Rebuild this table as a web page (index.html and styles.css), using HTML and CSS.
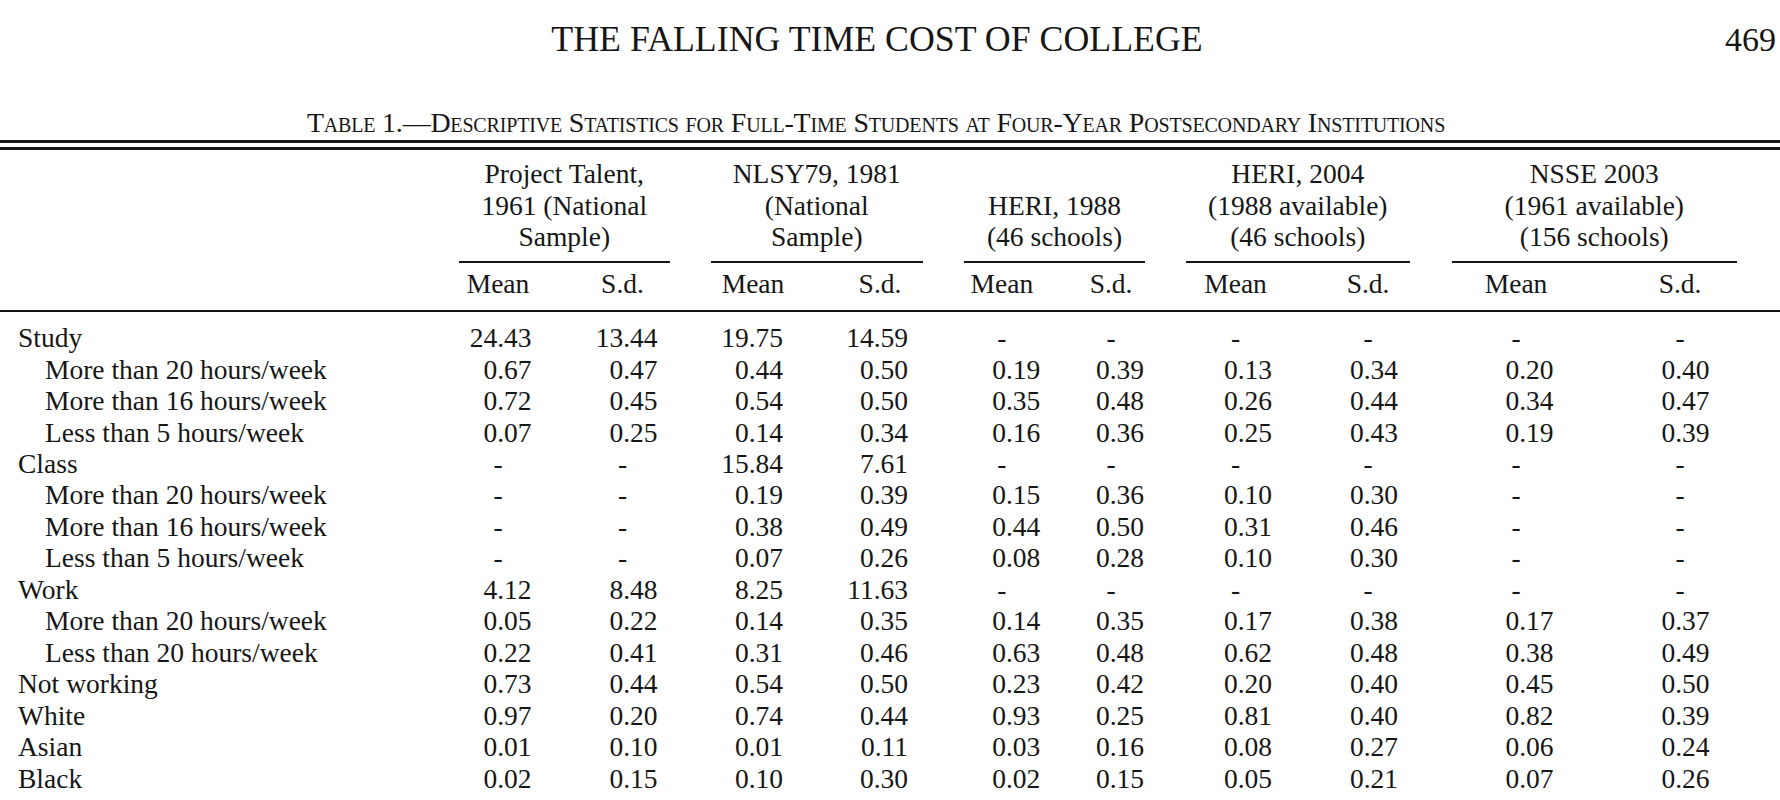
FILE: index.html
```html
<!DOCTYPE html>
<html lang="en">
<head>
<meta charset="utf-8">
<title>The Falling Time Cost of College</title>
<link rel="stylesheet" href="styles.css">
</head>
<body>
<header class="running">
  <div class="run-title">THE FALLING TIME COST OF COLLEGE</div>
  <div class="folio">469</div>
</header>
<div class="caption">Table 1.—Descriptive Statistics for Full-Time Students at Four-Year Postsecondary Institutions</div>
<div class="dbl"></div>
<table class="stats">
  <colgroup>
    <col class="w0"><col class="w1"><col class="w2"><col class="w3"><col class="w4"><col class="w5"><col class="w6"><col class="w7"><col class="w8"><col class="w9"><col class="w10">
  </colgroup>
  <thead>
    <tr class="groups">
      <th></th>
      <th colspan="2"><div class="span">Project Talent,<br>1961 (National<br>Sample)</div></th>
      <th colspan="2"><div class="span">NLSY79, 1981<br>(National<br>Sample)</div></th>
      <th colspan="2"><div class="span">HERI, 1988<br>(46 schools)</div></th>
      <th colspan="2"><div class="span">HERI, 2004<br>(1988 available)<br>(46 schools)</div></th>
      <th colspan="2"><div class="span">NSSE 2003<br>(1961 available)<br>(156 schools)</div></th>
    </tr>
    <tr class="r sub">
      <th></th>
      <th><span class="v c">Mean</span></th><th><span class="v c">S.d.</span></th>
      <th><span class="v c">Mean</span></th><th><span class="v c">S.d.</span></th>
      <th><span class="v c">Mean</span></th><th><span class="v c">S.d.</span></th>
      <th><span class="v c">Mean</span></th><th><span class="v c">S.d.</span></th>
      <th><span class="v c">Mean</span></th><th><span class="v c">S.d.</span></th>
    </tr>
  </thead>
  <tbody>
    <tr class="r"><td>Study</td><td><span class="v">24.43</span></td><td><span class="v">13.44</span></td><td><span class="v">19.75</span></td><td><span class="v">14.59</span></td><td><span class="v c">-</span></td><td><span class="v c">-</span></td><td><span class="v c">-</span></td><td><span class="v c">-</span></td><td><span class="v c">-</span></td><td><span class="v c">-</span></td></tr>
    <tr class="r ind"><td>More than 20 hours/week</td><td><span class="v">0.67</span></td><td><span class="v">0.47</span></td><td><span class="v">0.44</span></td><td><span class="v">0.50</span></td><td><span class="v">0.19</span></td><td><span class="v">0.39</span></td><td><span class="v">0.13</span></td><td><span class="v">0.34</span></td><td><span class="v">0.20</span></td><td><span class="v">0.40</span></td></tr>
    <tr class="r ind"><td>More than 16 hours/week</td><td><span class="v">0.72</span></td><td><span class="v">0.45</span></td><td><span class="v">0.54</span></td><td><span class="v">0.50</span></td><td><span class="v">0.35</span></td><td><span class="v">0.48</span></td><td><span class="v">0.26</span></td><td><span class="v">0.44</span></td><td><span class="v">0.34</span></td><td><span class="v">0.47</span></td></tr>
    <tr class="r ind"><td>Less than 5 hours/week</td><td><span class="v">0.07</span></td><td><span class="v">0.25</span></td><td><span class="v">0.14</span></td><td><span class="v">0.34</span></td><td><span class="v">0.16</span></td><td><span class="v">0.36</span></td><td><span class="v">0.25</span></td><td><span class="v">0.43</span></td><td><span class="v">0.19</span></td><td><span class="v">0.39</span></td></tr>
    <tr class="r"><td>Class</td><td><span class="v c">-</span></td><td><span class="v c">-</span></td><td><span class="v">15.84</span></td><td><span class="v">7.61</span></td><td><span class="v c">-</span></td><td><span class="v c">-</span></td><td><span class="v c">-</span></td><td><span class="v c">-</span></td><td><span class="v c">-</span></td><td><span class="v c">-</span></td></tr>
    <tr class="r ind"><td>More than 20 hours/week</td><td><span class="v c">-</span></td><td><span class="v c">-</span></td><td><span class="v">0.19</span></td><td><span class="v">0.39</span></td><td><span class="v">0.15</span></td><td><span class="v">0.36</span></td><td><span class="v">0.10</span></td><td><span class="v">0.30</span></td><td><span class="v c">-</span></td><td><span class="v c">-</span></td></tr>
    <tr class="r ind"><td>More than 16 hours/week</td><td><span class="v c">-</span></td><td><span class="v c">-</span></td><td><span class="v">0.38</span></td><td><span class="v">0.49</span></td><td><span class="v">0.44</span></td><td><span class="v">0.50</span></td><td><span class="v">0.31</span></td><td><span class="v">0.46</span></td><td><span class="v c">-</span></td><td><span class="v c">-</span></td></tr>
    <tr class="r ind"><td>Less than 5 hours/week</td><td><span class="v c">-</span></td><td><span class="v c">-</span></td><td><span class="v">0.07</span></td><td><span class="v">0.26</span></td><td><span class="v">0.08</span></td><td><span class="v">0.28</span></td><td><span class="v">0.10</span></td><td><span class="v">0.30</span></td><td><span class="v c">-</span></td><td><span class="v c">-</span></td></tr>
    <tr class="r"><td>Work</td><td><span class="v">4.12</span></td><td><span class="v">8.48</span></td><td><span class="v">8.25</span></td><td><span class="v">11.63</span></td><td><span class="v c">-</span></td><td><span class="v c">-</span></td><td><span class="v c">-</span></td><td><span class="v c">-</span></td><td><span class="v c">-</span></td><td><span class="v c">-</span></td></tr>
    <tr class="r ind"><td>More than 20 hours/week</td><td><span class="v">0.05</span></td><td><span class="v">0.22</span></td><td><span class="v">0.14</span></td><td><span class="v">0.35</span></td><td><span class="v">0.14</span></td><td><span class="v">0.35</span></td><td><span class="v">0.17</span></td><td><span class="v">0.38</span></td><td><span class="v">0.17</span></td><td><span class="v">0.37</span></td></tr>
    <tr class="r ind"><td>Less than 20 hours/week</td><td><span class="v">0.22</span></td><td><span class="v">0.41</span></td><td><span class="v">0.31</span></td><td><span class="v">0.46</span></td><td><span class="v">0.63</span></td><td><span class="v">0.48</span></td><td><span class="v">0.62</span></td><td><span class="v">0.48</span></td><td><span class="v">0.38</span></td><td><span class="v">0.49</span></td></tr>
    <tr class="r"><td>Not working</td><td><span class="v">0.73</span></td><td><span class="v">0.44</span></td><td><span class="v">0.54</span></td><td><span class="v">0.50</span></td><td><span class="v">0.23</span></td><td><span class="v">0.42</span></td><td><span class="v">0.20</span></td><td><span class="v">0.40</span></td><td><span class="v">0.45</span></td><td><span class="v">0.50</span></td></tr>
    <tr class="r"><td>White</td><td><span class="v">0.97</span></td><td><span class="v">0.20</span></td><td><span class="v">0.74</span></td><td><span class="v">0.44</span></td><td><span class="v">0.93</span></td><td><span class="v">0.25</span></td><td><span class="v">0.81</span></td><td><span class="v">0.40</span></td><td><span class="v">0.82</span></td><td><span class="v">0.39</span></td></tr>
    <tr class="r"><td>Asian</td><td><span class="v">0.01</span></td><td><span class="v">0.10</span></td><td><span class="v">0.01</span></td><td><span class="v">0.11</span></td><td><span class="v">0.03</span></td><td><span class="v">0.16</span></td><td><span class="v">0.08</span></td><td><span class="v">0.27</span></td><td><span class="v">0.06</span></td><td><span class="v">0.24</span></td></tr>
    <tr class="r"><td>Black</td><td><span class="v">0.02</span></td><td><span class="v">0.15</span></td><td><span class="v">0.10</span></td><td><span class="v">0.30</span></td><td><span class="v">0.02</span></td><td><span class="v">0.15</span></td><td><span class="v">0.05</span></td><td><span class="v">0.21</span></td><td><span class="v">0.07</span></td><td><span class="v">0.26</span></td></tr>
    <tr class="r"><td>Female</td><td><span class="v">0.46</span></td><td><span class="v">0.50</span></td><td><span class="v">0.48</span></td><td><span class="v">0.50</span></td><td><span class="v">0.55</span></td><td><span class="v">0.50</span></td><td><span class="v">0.61</span></td><td><span class="v">0.49</span></td><td><span class="v">0.64</span></td><td><span class="v">0.48</span></td></tr>
  </tbody>
</table>
</body>
</html>
```

FILE: styles.css
```css
html, body {
  margin: 0;
  padding: 0;
  background: #ffffff;
}

body {
  width: 1780px;
  height: 800px;
  overflow: hidden;
  font-family: "Liberation Serif", "Times New Roman", serif;
  color: #161616;
}

/* running head */
.running {
  display: flex;
  align-items: baseline;
  height: 40px;
  padding: 19px 4px 0 0;
  font-size: 35.8px;
  line-height: 40px;
}

.run-title {
  flex: 1;
  text-align: center;
  padding-left: 29px;
}

.folio {
  font-size: 34px;
}

/* table caption */
.caption {
  margin-top: 47.7px;
  padding-right: 28px;
  font-size: 27.9px;
  letter-spacing: -0.17px;
  line-height: 32px;
  font-variant: small-caps;
  text-align: center;
}

.dbl {
  margin-top: 1.3px;
  height: 4px;
  border-top: 3px solid #161616;
  border-bottom: 3px solid #161616;
}

/* table */
.stats {
  width: 1780px;
  table-layout: fixed;
  border-collapse: separate;
  border-spacing: 0;
  font-size: 27.5px;
  line-height: 31.46px;
}

.w0 { width: 438.5px; }
.w1 { width: 125.5px; }
.w2 { width: 126px; }
.w3 { width: 127px; }
.w4 { width: 126.5px; }
.w5 { width: 111px; }
.w6 { width: 111px; }
.w7 { width: 131.5px; }
.w8 { width: 133px; }
.w9 { width: 164px; }
.w10 { width: 186px; }

.stats th,
.stats td {
  padding: 0;
  font-weight: normal;
  white-space: nowrap;
}

.groups th {
  vertical-align: bottom;
  text-align: center;
  padding-top: 8.5px;
}

.groups .span {
  margin: 0 20.5px;
  padding-bottom: 8px;
  border-bottom: 2px solid #161616;
}

.groups th:last-child .span {
  margin-left: 21.7px;
  margin-right: 43.2px;
}

.sub th {
  padding-top: 5px;
  padding-bottom: 10.5px;
  border-bottom: 2px solid #161616;
}

tbody tr:first-child td {
  padding-top: 10.4px;
}

.r > th,
.r > td {
  text-align: right;
}

.r > :first-child {
  text-align: left;
  padding-left: 18px;
}

.ind > :first-child {
  padding-left: 45px;
}

.v {
  display: inline-flex;
  justify-content: flex-end;
}

.v.c {
  justify-content: center;
}

/* per-column alignment: numbers right-aligned, heads and dashes centred */
.r > :nth-child(2) { padding-right: 32.5px; }
.r > :nth-child(2) .v { width: 67px; }
.r > :nth-child(3) { padding-right: 32.5px; }
.r > :nth-child(3) .v { width: 70px; }
.r > :nth-child(4) { padding-right: 34px; }
.r > :nth-child(4) .v { width: 60px; }
.r > :nth-child(5) { padding-right: 35.5px; }
.r > :nth-child(5) .v { width: 56px; }
.r > :nth-child(6) { padding-right: 14.2px; }
.r > :nth-child(6) .v { width: 77px; }
.r > :nth-child(7) { padding-right: 21.5px; }
.r > :nth-child(7) .v { width: 66px; }
.r > :nth-child(8) { padding-right: 25px; }
.r > :nth-child(8) .v { width: 73px; }
.r > :nth-child(9) { padding-right: 32px; }
.r > :nth-child(9) .v { width: 60px; }
.r > :nth-child(10) { padding-right: 40.5px; }
.r > :nth-child(10) .v { width: 75px; }
.r > :nth-child(11) { padding-right: 70.5px; }
.r > :nth-child(11) .v { width: 59px; }
```
